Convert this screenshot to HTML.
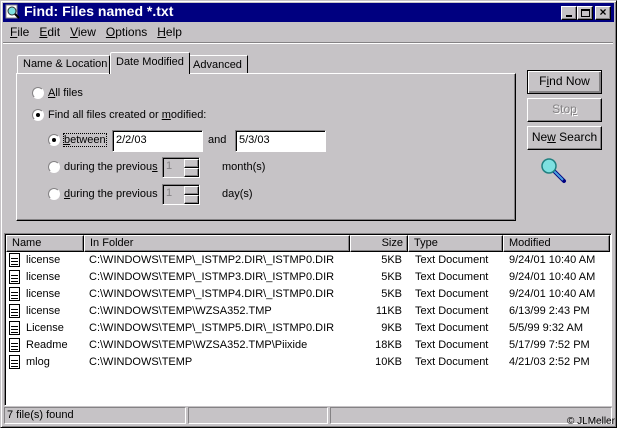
<!DOCTYPE html>
<html><head><style>
*{box-sizing:border-box;margin:0;padding:0}
body{width:617px;height:428px;background:#c6c3c6;font-family:"Liberation Sans",sans-serif;font-size:11px;color:#000;position:relative;overflow:hidden}
.a{position:absolute}
.out{border:1px solid;border-color:#fff #000 #000 #fff;box-shadow:inset -1px -1px #848284}
.in{border:1px solid;border-color:#848284 #fff #fff #848284;box-shadow:inset 1px 1px #000}
.btn{position:absolute;left:527px;width:75px;height:24px;text-align:center;line-height:21px;font-size:12px;background:#c6c3c6}
.rb{position:absolute;width:12px;height:12px;border-radius:50%;background:#fff;border:1px solid;border-color:#848284 #fff #fff #848284}
.rb.on::after{content:"";position:absolute;left:3px;top:3px;width:4px;height:4px;border-radius:50%;background:#000}
.t{position:absolute;font-size:11px;white-space:nowrap}
.row{position:absolute;left:6px;width:604px;height:17px;font-size:11px;white-space:nowrap}
.row span{position:absolute;top:2px}
.ic{position:absolute;left:3px;top:1px;width:11px;height:14px;border:1px solid #000;background:#fff;
background-image:repeating-linear-gradient(#fff 0 2px,#000 2px 3px);background-size:7px 9px;background-position:1px 2px;background-repeat:no-repeat}
.hd{position:absolute;top:0;height:17px;line-height:15px;padding-left:5px;font-size:11px}
</style></head><body>
<div class="a" style="left:0;top:0;width:617px;height:428px;border:1px solid;border-color:#c6c3c6 #000 #000 #c6c3c6;box-shadow:inset 1px 1px #fff,inset -1px -1px #848284"></div>
<div class="a" style="left:3px;top:3px;width:611px;height:19px;background:#000080"></div>
<svg class="a" style="left:5px;top:4px" width="16" height="16"><rect x="1" y="1" width="11" height="13" fill="#fff" stroke="#888"/><circle cx="7" cy="7" r="4" fill="#7ee0e0" stroke="#333"/><line x1="10" y1="10" x2="14" y2="14" stroke="#000" stroke-width="2"/></svg>
<div class="t" style="left:24px;top:3px;color:#fff;font-weight:bold;font-size:14px">Find: Files named *.txt</div>
<div class="a out" style="left:561px;top:6px;width:16px;height:14px;background:#c6c3c6"><div class="a" style="left:4px;top:8px;width:6px;height:2px;background:#000"></div></div>
<div class="a out" style="left:577px;top:6px;width:16px;height:14px;background:#c6c3c6"><div class="a" style="left:3px;top:2px;width:9px;height:8px;border:1px solid #000;border-top-width:2px"></div></div>
<div class="a out" style="left:595px;top:6px;width:16px;height:14px;background:#c6c3c6;font-weight:bold;font-size:12px;line-height:11px;text-align:center">×</div>
<div class="t" style="left:10px;top:25px;font-size:12px"><u>F</u>ile&nbsp;&nbsp;&nbsp;<u>E</u>dit&nbsp;&nbsp;&nbsp;<u>V</u>iew&nbsp;&nbsp;&nbsp;<u>O</u>ptions&nbsp;&nbsp;&nbsp;<u>H</u>elp</div>
<div class="a" style="left:3px;top:42px;width:610px;height:2px;border-top:1px solid #848284;border-bottom:1px solid #fff"></div>
<!-- panel -->
<div class="a" style="left:16px;top:73px;width:500px;height:148px;border:1px solid;border-color:#fff #000 #000 #fff;box-shadow:inset -1px -1px #848284"></div>
<div class="a" style="left:17px;top:55px;width:93px;height:19px;border:1px solid;border-bottom:none;border-color:#fff #000 #000 #fff;border-radius:2px 2px 0 0"><div class="t" style="left:5px;top:2px;font-size:11px">Name &amp; Location</div></div>
<div class="a" style="left:110px;top:52px;width:80px;height:22px;border:1px solid;border-bottom:none;border-color:#fff #000 #000 #fff;background:#c6c3c6;border-radius:2px 2px 0 0"><div class="t" style="left:5px;top:3px;font-size:11px">Date Modified</div></div>
<div class="a" style="left:190px;top:55px;width:58px;height:18px;border:1px solid;border-bottom:none;border-color:#fff #000 #000 #fff;border-left:none"><div class="t" style="left:3px;top:3px;font-size:11px">Advanced</div></div>
<div class="rb" style="left:32px;top:87px"></div><div class="t" style="left:48px;top:87px"><u>A</u>ll files</div>
<div class="rb on" style="left:32px;top:109px"></div><div class="t" style="left:48px;top:109px">Find all files created or <u>m</u>odified:</div>
<div class="rb on" style="left:48px;top:134px"></div><div class="t" style="left:64px;top:134px;outline:1px dotted #000"><u>b</u>etween</div>
<div class="a in" style="left:112px;top:130px;width:91px;height:22px;background:#fff"><div class="t" style="left:3px;top:3px">2/2/03</div></div>
<div class="t" style="left:208px;top:134px">and</div>
<div class="a in" style="left:235px;top:130px;width:91px;height:22px;background:#fff"><div class="t" style="left:3px;top:3px">5/3/03</div></div>
<div class="rb" style="left:48px;top:161px"></div><div class="t" style="left:64px;top:161px">during the previou<u>s</u></div>
<div class="a in" style="left:162px;top:157px;width:38px;height:21px"><div class="t" style="left:3px;top:2px;color:#848284">1</div><div class="a out" style="left:21px;top:1px;width:15px;height:9px"></div><div class="a out" style="left:21px;top:10px;width:15px;height:9px"></div></div>
<div class="t" style="left:222px;top:161px">month(s)</div>
<div class="rb" style="left:48px;top:188px"></div><div class="t" style="left:64px;top:188px"><u>d</u>uring the previous</div>
<div class="a in" style="left:162px;top:184px;width:38px;height:21px"><div class="t" style="left:3px;top:2px;color:#848284">1</div><div class="a out" style="left:21px;top:1px;width:15px;height:9px"></div><div class="a out" style="left:21px;top:10px;width:15px;height:9px"></div></div>
<div class="t" style="left:222px;top:188px">day(s)</div>
<!-- buttons -->
<div class="btn out" style="top:70px;border:1px solid #000;box-shadow:inset 1px 1px #fff,inset -1px -1px #848284,inset -2px -2px #848284">F<u>i</u>nd Now</div>
<div class="btn out" style="top:98px;color:#848284;text-shadow:1px 1px #fff">Sto<u>p</u></div>
<div class="btn out" style="top:126px">Ne<u>w</u> Search</div>
<svg class="a" style="left:540px;top:157px" width="30" height="28"><line x1="12" y1="12" x2="24" y2="24" stroke="#000080" stroke-width="4" stroke-linecap="round"/><line x1="12" y1="12" x2="23" y2="23" stroke="#4aa0e0" stroke-width="2"/><circle cx="9" cy="9" r="7" fill="#7ee0e0" stroke="#208080" stroke-width="1.5"/></svg>
<!-- list -->
<div class="a in" style="left:4px;top:233px;width:608px;height:173px;background:#fff"></div>
<div class="a" style="left:6px;top:235px;width:604px;height:17px;background:#c6c3c6">
<div class="hd out" style="left:0;width:78px">Name</div>
<div class="hd out" style="left:78px;width:266px">In Folder</div>
<div class="hd out" style="left:344px;width:58px;text-align:right;padding-right:4px">Size</div>
<div class="hd out" style="left:402px;width:95px">Type</div>
<div class="hd out" style="left:497px;width:107px">Modified</div>
</div>
<div class="row" style="top:252px"><i class="ic"></i><span style="left:20px">license</span><span style="left:83px">C:\WINDOWS\TEMP\_ISTMP2.DIR\_ISTMP0.DIR</span><span style="right:208px">5KB</span><span style="left:409px">Text Document</span><span style="left:503px">9/24/01 10:40 AM</span></div>
<div class="row" style="top:269px"><i class="ic"></i><span style="left:20px">license</span><span style="left:83px">C:\WINDOWS\TEMP\_ISTMP3.DIR\_ISTMP0.DIR</span><span style="right:208px">5KB</span><span style="left:409px">Text Document</span><span style="left:503px">9/24/01 10:40 AM</span></div>
<div class="row" style="top:286px"><i class="ic"></i><span style="left:20px">license</span><span style="left:83px">C:\WINDOWS\TEMP\_ISTMP4.DIR\_ISTMP0.DIR</span><span style="right:208px">5KB</span><span style="left:409px">Text Document</span><span style="left:503px">9/24/01 10:40 AM</span></div>
<div class="row" style="top:303px"><i class="ic"></i><span style="left:20px">license</span><span style="left:83px">C:\WINDOWS\TEMP\WZSA352.TMP</span><span style="right:208px">11KB</span><span style="left:409px">Text Document</span><span style="left:503px">6/13/99 2:43 PM</span></div>
<div class="row" style="top:320px"><i class="ic"></i><span style="left:20px">License</span><span style="left:83px">C:\WINDOWS\TEMP\_ISTMP5.DIR\_ISTMP0.DIR</span><span style="right:208px">9KB</span><span style="left:409px">Text Document</span><span style="left:503px">5/5/99 9:32 AM</span></div>
<div class="row" style="top:337px"><i class="ic"></i><span style="left:20px">Readme</span><span style="left:83px">C:\WINDOWS\TEMP\WZSA352.TMP\Piixide</span><span style="right:208px">18KB</span><span style="left:409px">Text Document</span><span style="left:503px">5/17/99 7:52 PM</span></div>
<div class="row" style="top:354px"><i class="ic"></i><span style="left:20px">mlog</span><span style="left:83px">C:\WINDOWS\TEMP</span><span style="right:208px">10KB</span><span style="left:409px">Text Document</span><span style="left:503px">4/21/03 2:52 PM</span></div>
<!-- status -->
<div class="a" style="left:4px;top:407px;width:182px;height:17px;border:1px solid;border-color:#848284 #fff #fff #848284"><div class="t" style="left:2px;top:1px">7 file(s) found</div></div>
<div class="a" style="left:188px;top:407px;width:140px;height:17px;border:1px solid;border-color:#848284 #fff #fff #848284"></div>
<div class="a" style="left:330px;top:407px;width:282px;height:17px;border:1px solid;border-color:#848284 #fff #fff #848284"></div>
<div class="t" style="left:567px;top:416px;font-size:10px">© JLMeller</div>
</body></html>
